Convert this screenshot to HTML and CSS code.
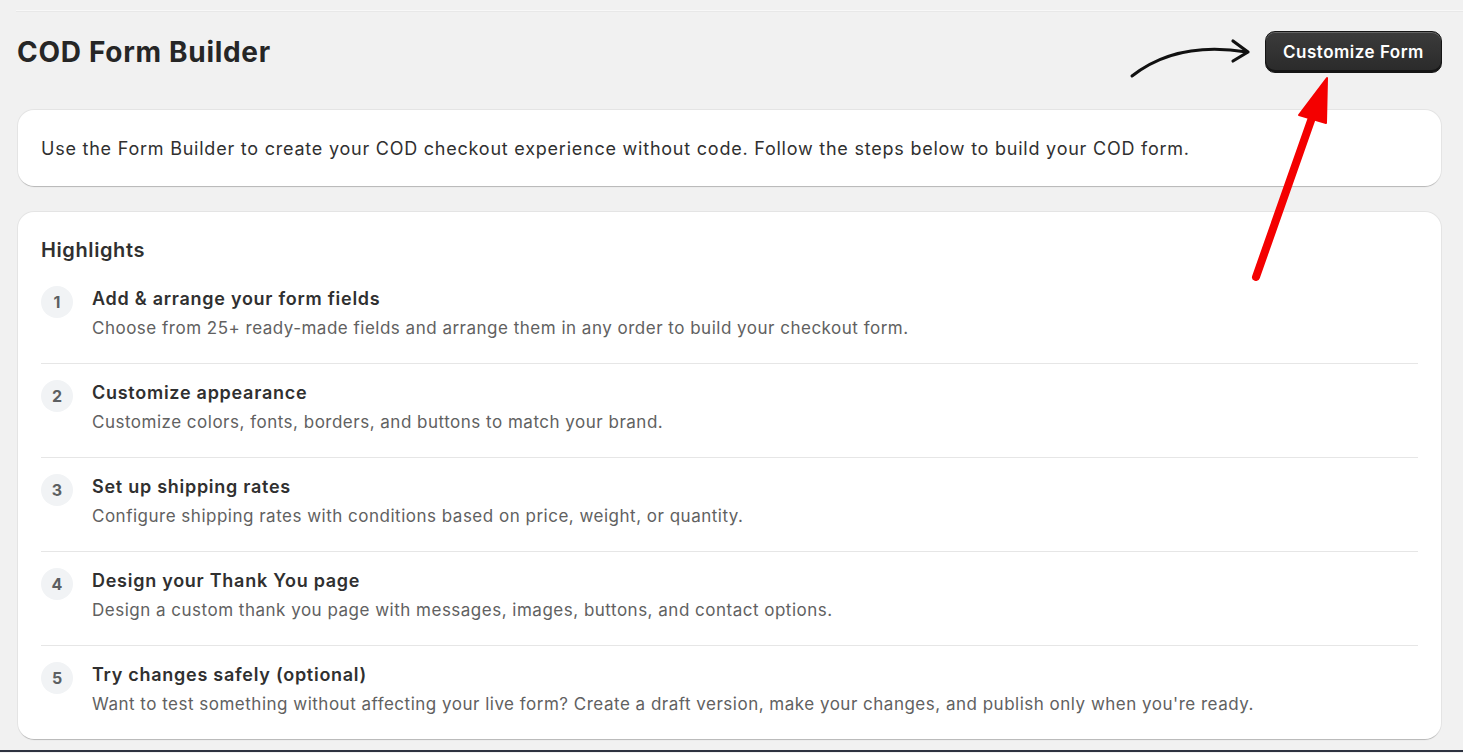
FILE: index.html
```html
<!DOCTYPE html>
<html lang="en">
<head>
<meta charset="utf-8">
<title>COD Form Builder</title>
<link rel="stylesheet" href="styles.css">
</head>
<body>
<div class="topline"></div>
<main class="page">
  <header class="header">
    <h1 class="title">COD Form Builder</h1>
    <button class="btn">Customize Form</button>
  </header>

  <section class="card intro">
    <p>Use the Form Builder to create your COD checkout experience without code. Follow the steps below to build your COD form.</p>
  </section>

  <section class="card highlights">
    <h2 class="h-title">Highlights</h2>
    <ol class="steps">
      <li class="step">
        <span class="num">1</span>
        <div class="step-body">
          <div class="step-title">Add &amp; arrange your form fields</div>
          <div class="step-desc">Choose from 25+ ready-made fields and arrange them in any order to build your checkout form.</div>
        </div>
      </li>
      <li class="step">
        <span class="num">2</span>
        <div class="step-body">
          <div class="step-title">Customize appearance</div>
          <div class="step-desc">Customize colors, fonts, borders, and buttons to match your brand.</div>
        </div>
      </li>
      <li class="step">
        <span class="num">3</span>
        <div class="step-body">
          <div class="step-title">Set up shipping rates</div>
          <div class="step-desc">Configure shipping rates with conditions based on price, weight, or quantity.</div>
        </div>
      </li>
      <li class="step">
        <span class="num">4</span>
        <div class="step-body">
          <div class="step-title">Design your Thank You page</div>
          <div class="step-desc">Design a custom thank you page with messages, images, buttons, and contact options.</div>
        </div>
      </li>
      <li class="step">
        <span class="num">5</span>
        <div class="step-body">
          <div class="step-title">Try changes safely (optional)</div>
          <div class="step-desc">Want to test something without affecting your live form? Create a draft version, make your changes, and publish only when you're ready.</div>
        </div>
      </li>
    </ol>
  </section>
</main>
<div class="bottombar"></div>

<svg class="annot" width="1463" height="753" viewBox="0 0 1463 753" aria-hidden="true">
  <path d="M1132 76 C1160 54, 1198 44, 1247 52" fill="none" stroke="#111" stroke-width="3" stroke-linecap="round"/>
  <path d="M1233 41 L1248 52 L1233 61" fill="none" stroke="#111" stroke-width="3.2" stroke-linecap="round" stroke-linejoin="round"/>
  <path d="M1256 277 L1314 112" fill="none" stroke="#f40000" stroke-width="8" stroke-linecap="round"/>
  <path d="M1327 78 L1299 115 L1326 123 Z" fill="#f40000" stroke="#f40000" stroke-width="2" stroke-linejoin="round"/>
</svg>
</body>
</html>
```

FILE: styles.css
```css
* { box-sizing: border-box; }

html, body {
  margin: 0;
  padding: 0;
  background: #f1f1f1;
  font-family: Inter, "Noto Sans", "Liberation Sans", sans-serif;
  color: #303030;
}

body {
  position: relative;
  width: 1463px;
  height: 753px;
  overflow: hidden;
}

.topline {
  margin: 10px 0 0 16px;
  height: 2px;
  border-top: 1px solid #f8f8f8;
  border-bottom: 1px solid #e8e8e8;
}

.page {
  padding: 0 22px 0 18px;
}

.header {
  display: flex;
  align-items: center;
  justify-content: space-between;
  margin-top: 19px;
  height: 42px;
}

.title {
  margin: 0 0 0 -1px;
  font-size: 28px;
  font-weight: 700;
  letter-spacing: 0.7px;
  color: #262626;
}

.btn {
  height: 42px;
  width: 177px;
  margin-right: -1px;
  border-radius: 10px;
  border: 1px solid #151515;
  background: linear-gradient(#3b3b3b, #2a2a2a);
  box-shadow: inset 0 1px 0 rgba(255,255,255,0.22), inset 0 -2px 0 rgba(0,0,0,0.5);
  color: #fff;
  font-family: Inter, "Noto Sans", sans-serif;
  font-size: 17px;
  font-weight: 600;
  letter-spacing: 0.5px;
  padding: 0;
}

.card {
  background: #fff;
  border-radius: 16px;
  box-shadow: 0 2px 1px -1px rgba(0,0,0,0.2), 0 0 0 1px rgba(0,0,0,0.05);
}

.intro {
  margin-top: 37px;
  padding: 25px 23px 23px 23px;
}

.intro p {
  margin: 0;
  font-size: 18px;
  line-height: 28px;
  letter-spacing: 0.77px;
  color: #303030;
}

.highlights {
  margin-top: 26px;
  padding: 24px 23px 0 23px;
}

.h-title {
  margin: 0 0 6px 0;
  font-size: 20px;
  line-height: 28px;
  font-weight: 600;
  letter-spacing: 0.6px;
  color: #303030;
}

.steps {
  list-style: none;
  margin: 0;
  padding: 0;
}

.step {
  display: flex;
  align-items: flex-start;
  gap: 19px;
  padding: 17px 0 21px 0;
  border-top: 1px solid #e6e6e6;
}

.step:first-child {
  border-top: 0;
}

.num {
  flex: none;
  width: 32px;
  height: 32px;
  margin-top: -1px;
  border-radius: 50%;
  background: #f1f3f5;
  color: #5c5f62;
  font-size: 16px;
  font-weight: 700;
  display: flex;
  align-items: center;
  justify-content: center;
}

.step-title {
  font-size: 18px;
  line-height: 24px;
  font-weight: 600;
  letter-spacing: 0.73px;
  color: #303030;
}

.step-desc {
  margin-top: 3px;
  font-size: 17px;
  line-height: 28px;
  color: #616161;
  letter-spacing: 0.5px;
}

.bottombar {
  margin-top: 11px;
  height: 2px;
  background: #2d3240;
}

.annot {
  position: absolute;
  left: 0;
  top: 0;
  pointer-events: none;
}
```
